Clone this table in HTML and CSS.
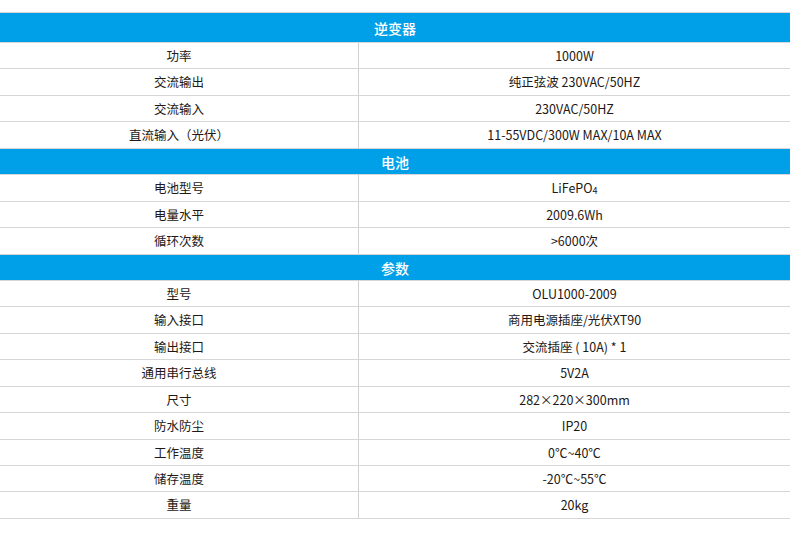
FILE: index.html
```html
<!DOCTYPE html>
<html lang="zh-CN">
<head>
<meta charset="utf-8">
<title>规格参数</title>
<link rel="stylesheet" href="styles.css">
</head>
<body>
<div class="spec">
  <div class="row head first"><div class="cell full">逆变器</div></div>
  <div class="row"><div class="cell key">功率</div><div class="cell val">1000W</div></div>
  <div class="row"><div class="cell key">交流输出</div><div class="cell val">纯正弦波 230VAC/50HZ</div></div>
  <div class="row"><div class="cell key">交流输入</div><div class="cell val">230VAC/50HZ</div></div>
  <div class="row"><div class="cell key">直流输入（光伏）</div><div class="cell val">11-55VDC/300W MAX/10A MAX</div></div>
  <div class="row head"><div class="cell full">电池</div></div>
  <div class="row"><div class="cell key">电池型号</div><div class="cell val">LiFePO<span class="sub">4</span></div></div>
  <div class="row"><div class="cell key">电量水平</div><div class="cell val">2009.6Wh</div></div>
  <div class="row"><div class="cell key">循环次数</div><div class="cell val">&gt;6000次</div></div>
  <div class="row head"><div class="cell full">参数</div></div>
  <div class="row"><div class="cell key">型号</div><div class="cell val">OLU1000-2009</div></div>
  <div class="row"><div class="cell key">输入接口</div><div class="cell val">商用电源插座/光伏XT90</div></div>
  <div class="row"><div class="cell key">输出接口</div><div class="cell val">交流插座 ( 10A) * 1</div></div>
  <div class="row"><div class="cell key">通用串行总线</div><div class="cell val">5V2A</div></div>
  <div class="row"><div class="cell key">尺寸</div><div class="cell val">282×220×300mm</div></div>
  <div class="row"><div class="cell key">防水防尘</div><div class="cell val">IP20</div></div>
  <div class="row"><div class="cell key">工作温度</div><div class="cell val">0℃~40℃</div></div>
  <div class="row"><div class="cell key">储存温度</div><div class="cell val">-20℃~55℃</div></div>
  <div class="row"><div class="cell key">重量</div><div class="cell val">20kg</div></div>
</div>
</body>
</html>
```
FILE: styles.css
```css
html, body {
  margin: 0;
  padding: 0;
  background: #ffffff;
}
body {
  font-family: "Noto Sans CJK SC", "Noto Sans", sans-serif;
  color: #231815;
  font-size: 12.5px;
}
.spec {
  padding-top: 12px;
}
.row {
  display: grid;
  grid-template-columns: 359px 1fr;
  height: 25.44px;
  border-bottom: 1px solid #d6d6d6;
}
.row.first {
  height: 29px;
  border-top: 1px solid #d6d6d6;
}
.cell {
  display: flex;
  align-items: center;
  justify-content: center;
  line-height: 1;
  padding-top: 1px;
}
.key {
  border-right: 1px solid #d0d0d0;
}
.head {
  background: #00a0e9;
  grid-template-columns: 1fr;
}
.full {
  color: #ffffff;
  font-size: 14px;
  font-weight: 500;
}
.sub {
  font-size: 9px;
  position: relative;
  top: 2px;
}
```
